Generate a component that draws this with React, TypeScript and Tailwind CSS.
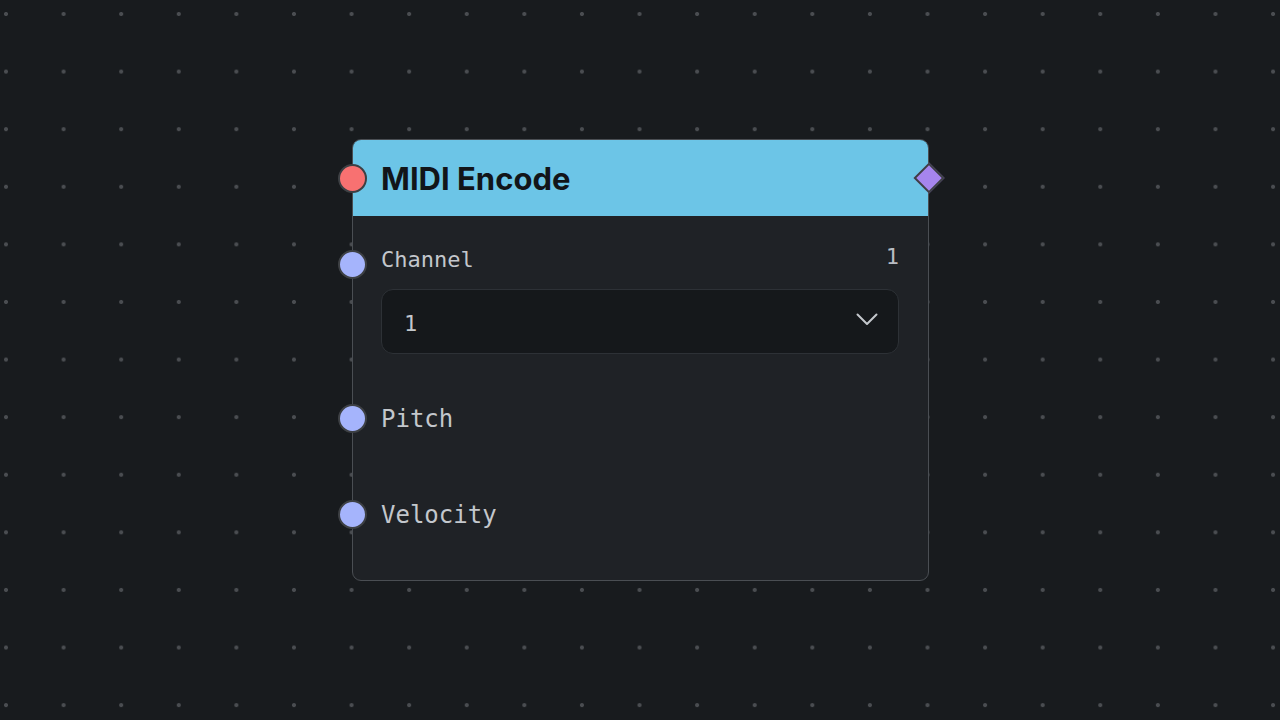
import React from "react";

// Connection port sitting on the node's left edge
function Port({ top, color }: { top: number; color: string }) {
  return (
    <div
      className={`absolute -left-[15.5px] w-[29px] h-[29px] rounded-full border-2 border-[#3d4044] ${color}`}
      style={{ top: top - 14.5 }}
    />
  );
}

export default function App() {
  return (
    <div className="relative w-[1280px] h-[720px] overflow-hidden bg-[#181b1e] [background-image:radial-gradient(circle,#4a4d51_1.6px,transparent_2.4px)] [background-size:57.6px_57.6px] [background-position:-22.8px_-14.8px]">
      {/* node */}
      <div className="absolute left-[352px] top-[139px] w-[577px] rounded-[9px] border-[1.5px] border-[#4a4e53] bg-[#1f2226]">
        <div className="h-[76px] rounded-t-[8px] bg-[#6cc5e7] flex items-center pl-[28px]">
          <span className="font-['Inter','Liberation_Sans',sans-serif] font-bold text-[31px] leading-none text-[#121519]">
            MIDI Encode
          </span>
        </div>

        <div className="pl-[28px] pr-[29px] pt-[30px] pb-[51px] font-['DejaVu_Sans_Mono',monospace] text-[#c3c7cc]">
          <div className="flex items-start justify-between">
            <span className="text-[22px] leading-[28px]">Channel</span>
            <span className="text-[22px] leading-[22px] text-[#b8bdc3]">1</span>
          </div>

          <div className="mt-[15px] h-[65px] rounded-[12px] border border-[#2d3136] bg-[#15181b] flex items-center justify-between pl-[22px] pr-[20px]">
            <span className="text-[22px] leading-none pt-[4px] text-[#c3c7cc]">1</span>
            <svg width="22" height="13" viewBox="0 0 22 13" className="-mt-[4px]">
              <path d="M1.5 1.5 L11 11 L20.5 1.5" fill="none" stroke="#c3c7cc" strokeWidth="2" strokeLinecap="round" strokeLinejoin="round" />
            </svg>
          </div>

          <div className="mt-[51px] text-[24px] leading-[28px]">Pitch</div>
          <div className="mt-[68px] text-[24px] leading-[28px]">Velocity</div>
        </div>

        {/* ports */}
        <Port top={38} color="bg-[#f87171]" />
        <Port top={124} color="bg-[#a5b4fc]" />
        <Port top={278} color="bg-[#a5b4fc]" />
        <Port top={374} color="bg-[#a5b4fc]" />
        <div className="absolute -right-[11.5px] top-[26.5px] w-[22px] h-[22px] rotate-45 border-2 border-[#3d4044] bg-[#a685ee]" />
      </div>
    </div>
  );
}
